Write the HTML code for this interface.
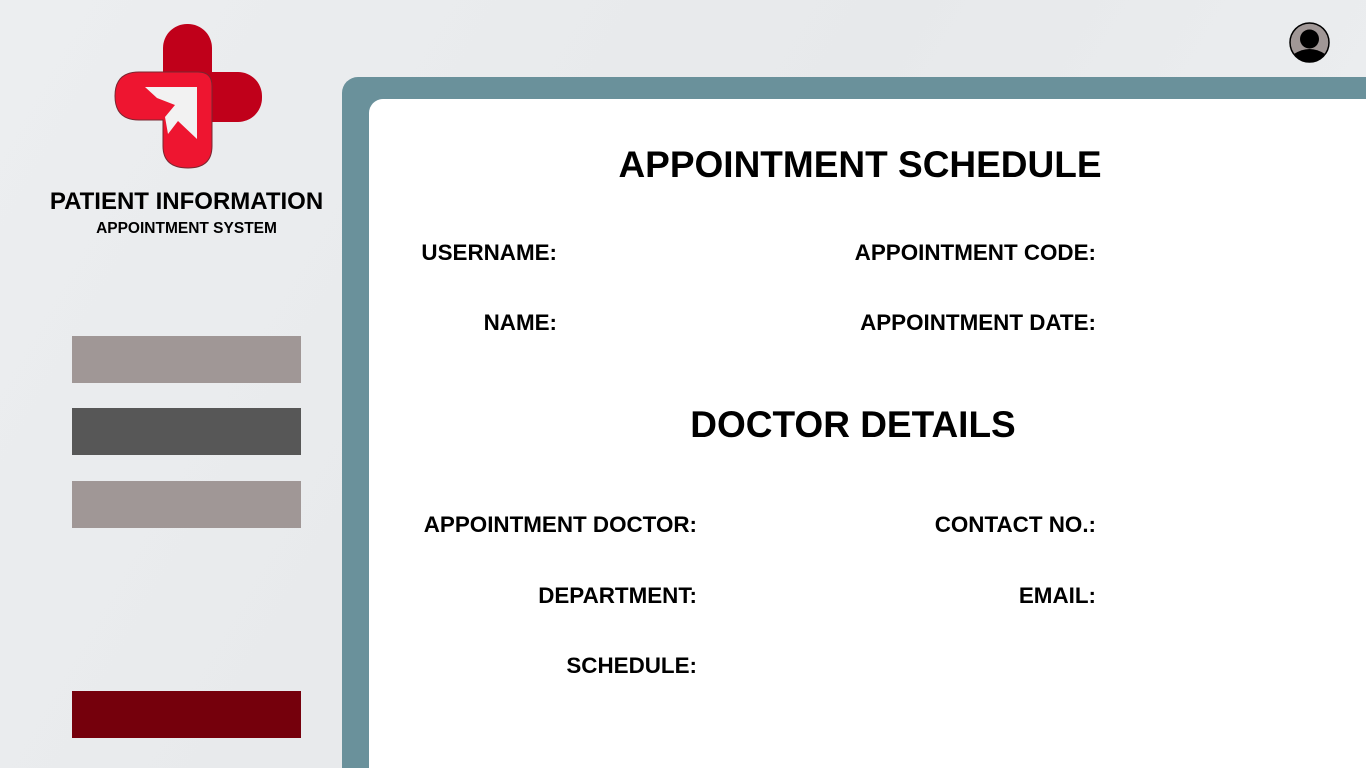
<!DOCTYPE html>
<html><head><meta charset="utf-8"><style>
*{margin:0;padding:0;box-sizing:border-box}
html{width:1366px;height:768px;overflow:hidden}
body{width:1366px;height:768px;overflow:hidden;position:relative;background:linear-gradient(120deg,#eceef0,#e7e9eb 50%,#eef0f2);font-family:"Liberation Sans",sans-serif;font-weight:bold;color:#000}
.a{position:absolute}
.panel{left:342px;top:77px;width:1030px;height:691px;background:#6a919b;border-top-left-radius:16px}
.card{left:369px;top:99px;width:1000px;height:669px;background:#fff;border-top-left-radius:14px}
.btn{left:72px;width:229px;height:47px}
.lbl{font-size:22.4px;white-space:nowrap}
.r{text-align:right}
h1{position:absolute;font-size:37px;white-space:nowrap;text-align:center}
</style></head><body>
<svg class="a" style="left:0;top:0" width="340" height="200">
<rect x="163" y="24" width="49" height="100" rx="24" fill="#c0001a"/>
<rect x="163" y="72" width="99" height="50" rx="24" fill="#c0001a"/>
<path d="M139 72 H198 Q212 72 212 86 V146 Q212 168 188 168 Q163 168 163 146 V120 H139 Q115 120 115 96 Q115 72 139 72Z" fill="#ee1530" stroke="#7a2630" stroke-width="1"/>
<path d="M145 87 H197 V139 L178 121 L168 134 L165 117 L175 105 L157 98Z" fill="#f2f2f2"/>
</svg>
<div class="a" style="left:0;width:373px;top:188px;text-align:center;font-size:24px">PATIENT INFORMATION</div>
<div class="a" style="left:0;width:373px;top:220px;text-align:center;font-size:15.5px">APPOINTMENT SYSTEM</div>
<svg class="a" style="left:1289px;top:22px" width="41" height="41" viewBox="0 0 41 41">
<circle cx="20.5" cy="20.5" r="19.5" fill="#a09796" stroke="#000" stroke-width="1.5"/>
<circle cx="20.5" cy="17" r="9.5" fill="#000"/>
<path d="M5 32 Q20.5 22 36 32 Q30 40 20.5 40 Q11 40 5 32Z" fill="#000"/>
</svg>
<div class="a btn" style="top:336px;background:#a09796"></div>
<div class="a btn" style="top:408px;background:#575757"></div>
<div class="a btn" style="top:481px;background:#a09796"></div>
<div class="a btn" style="top:691px;background:#75000c"></div>
<div class="a panel"></div>
<div class="a card"></div>
<h1 style="left:560px;width:600px;top:144px">APPOINTMENT SCHEDULE</h1>
<h1 style="left:553px;width:600px;top:404px">DOCTOR DETAILS</h1>
<div class="a lbl r" style="right:809px;top:240px">USERNAME:</div>
<div class="a lbl r" style="right:809px;top:310px">NAME:</div>
<div class="a lbl r" style="right:270px;top:240px">APPOINTMENT CODE:</div>
<div class="a lbl r" style="right:270px;top:310px">APPOINTMENT DATE:</div>
<div class="a lbl r" style="right:669px;top:512px">APPOINTMENT DOCTOR:</div>
<div class="a lbl r" style="right:669px;top:583px">DEPARTMENT:</div>
<div class="a lbl r" style="right:669px;top:653px">SCHEDULE:</div>
<div class="a lbl r" style="right:270px;top:512px">CONTACT NO.:</div>
<div class="a lbl r" style="right:270px;top:583px">EMAIL:</div>
</body></html>
